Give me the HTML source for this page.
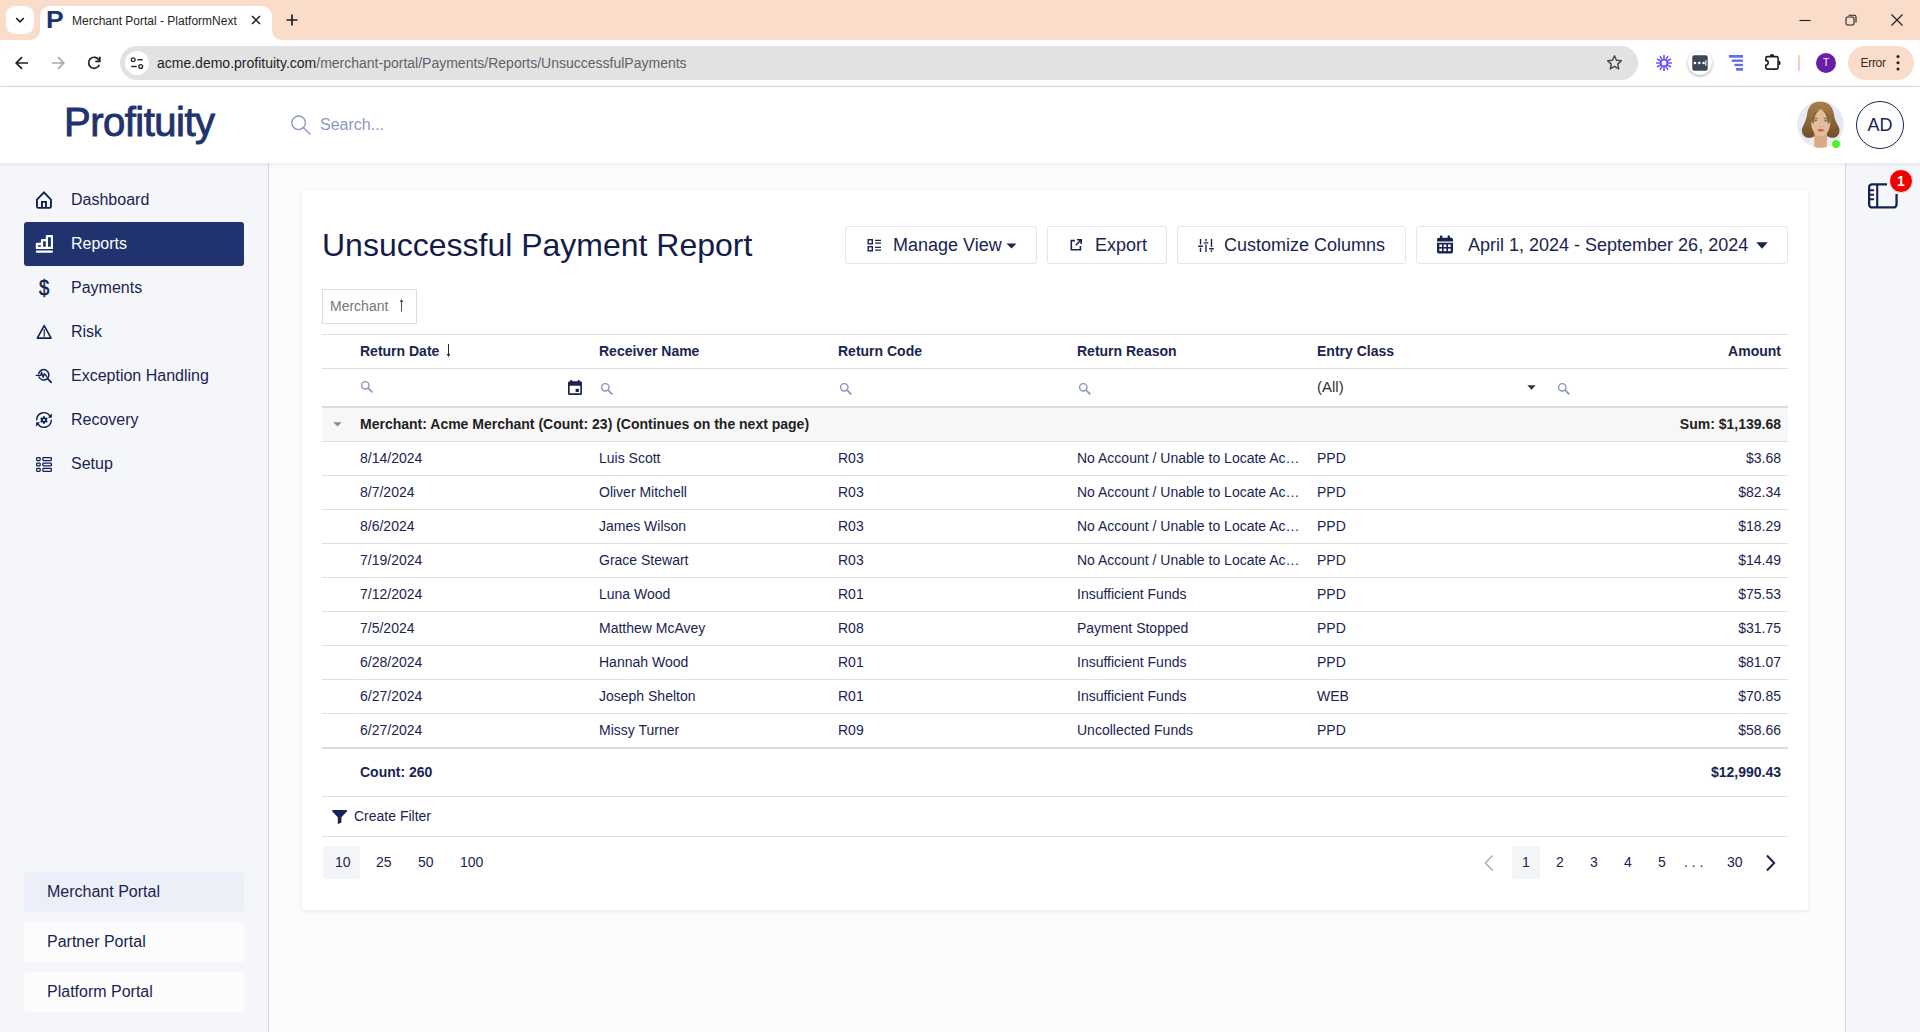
<!DOCTYPE html>
<html lang="en">
<head>
<meta charset="utf-8">
<title>Merchant Portal - PlatformNext</title>
<style>
*{box-sizing:border-box;margin:0;padding:0}
html,body{width:1920px;height:1032px;overflow:hidden;background:#fcfcfc;font-family:"Liberation Sans",Arial,sans-serif;color:#1a2452}
.abs{position:absolute}
svg{display:block}
/* ---------- browser chrome ---------- */
#tabbar{left:0;top:0;width:1920px;height:40px;background:#f9dcc9}
#tabsearch{left:6px;top:6px;width:28px;height:28px;border-radius:9px;background:#fff}
#tab{left:40px;top:6px;width:232px;height:34px;background:#fff;border-radius:10px 10px 0 0}
#tab:before,#tab:after{content:"";position:absolute;bottom:0;width:10px;height:10px}
#tab:before{left:-10px;background:radial-gradient(circle at 0 0,transparent 9.5px,#fff 10.5px)}
#tab:after{right:-10px;background:radial-gradient(circle at 100% 0,transparent 9.5px,#fff 10.5px)}
#tabtitle{left:72px;top:13px;font-size:12px;line-height:16px;color:#1f1f1f;white-space:nowrap;font-family:"Liberation Sans",sans-serif}
#toolbar{left:0;top:40px;width:1920px;height:46px;background:#fff;border-radius:10px 10px 0 0}
#tbline{left:0;top:86px;width:1920px;height:1px;background:#d9d9d9}
#omni{left:120px;top:46px;width:1518px;height:34px;border-radius:17px;background:#e2e2e2}
#omni .chip{left:5px;top:5px;width:24px;height:24px;border-radius:12px;background:#fff}
#url{left:157px;top:54px;font-size:14px;line-height:18px;white-space:nowrap;color:#1f1f1f}
#url span{color:#5f6368}
#errchip{left:1848px;top:46px;width:66px;height:34px;border-radius:17px;background:#f9dcc9}
#errchip span{position:absolute;left:12.500px;top:9px;letter-spacing:-.3px;font-size:12px;line-height:16px;color:#3a2a22}
#prof{left:1816px;top:53px;font-weight:400;width:20px;height:20px;border-radius:10px;background:#6a1ea8;color:#fff;font-size:10px;line-height:20px;text-align:center}
/* ---------- app ---------- */
#apphead{left:0;top:87px;width:1920px;height:76px;background:#fff;box-shadow:0 1px 5px rgba(0,0,0,.09)}
#logo{left:64px;top:96px;font-size:40px;line-height:52px;font-weight:400;letter-spacing:-.5px;color:#22326e;-webkit-text-stroke:.9px #22326e;white-space:nowrap}
#search{left:320px;top:115px;font-size:16px;line-height:20px;color:#8d9ac4}
#ad{left:1856px;top:101px;width:48px;height:48px;border-radius:24px;border:1px solid #1a2452;font-size:18px;line-height:46px;text-align:center;color:#1a2452;background:#fff}
#side{left:0;top:163px;width:269px;height:869px;background:#f5f6fa;border-right:1px solid #d5d8ea}
#rpanel{left:1845px;top:163px;width:75px;height:869px;background:#f5f6fa;border-left:1px solid #d5d8ea}
.nav{left:24px;width:220px;height:44px;border-radius:3px;font-size:16px;line-height:44px;color:#1a2452;padding-left:47px;white-space:nowrap}
.nav.on{background:#21336f;color:#fff}
.portal{left:24px;width:220px;height:40px;border-radius:3px;background:#fcfcfc;font-size:16px;line-height:40px;padding-left:23px;color:#1a2452}
.portal.on{background:#eceef8}
#card{left:302px;top:190px;width:1506px;height:720px;background:#fff;box-shadow:0 1px 4px rgba(40,50,90,.10)}
h1{position:absolute;left:322px;top:223px;font-size:32px;line-height:44px;font-weight:400;color:#141c4a;white-space:nowrap}
.btn{top:226px;height:38px;border:1px solid #e4e5ee;border-radius:3px;background:#fff;font-size:18px;line-height:37px;color:#1a2452;white-space:nowrap}
.btn span{position:absolute;top:0}

.ln{left:322px;width:1466px;height:1px;background:#e0e0e0}
.ln2{left:322px;width:1466px;height:2px;background:#dcdcdc}
.grp{left:322px;top:408px;width:1466px;height:33px;background:#f7f7f7}
.th{top:334px;font-size:14px;line-height:34px;font-weight:700;color:#1a2452;white-space:nowrap}
.gt{top:407px;font-size:14px;line-height:34px;font-weight:700;color:#222;white-space:nowrap}
.td{font-size:14px;line-height:34px;color:#1a2452;white-space:nowrap}
.ft{top:755px;font-size:14px;line-height:34px;font-weight:700;color:#1a2452;white-space:nowrap}
.cf{left:354px;top:799px;font-size:14px;line-height:34px;color:#1a2452;white-space:nowrap}
.pg{top:845px;font-size:14px;line-height:34px;color:#1a2452;white-space:nowrap}
.pgsel{top:846px;height:33px;border-radius:3px;background:#f4f5f9}

#gchip{left:322px;top:289px;width:95px;height:35px;border:1px solid #ddd;background:#fff}
#gchip span{position:absolute;left:7px;top:0;font-size:14px;line-height:33px;color:#777}

#fav{left:46px;top:7px;width:20px;font-size:23px;line-height:27px;font-weight:700;color:#22326e;transform:scaleX(1.15);transform-origin:0 50%}

#badge{left:1889px;top:168.500px;width:24px;height:24px;border-radius:12px;background:#f20000;border:1px solid #fbeaea;color:#fff;font-size:14px;font-weight:700;line-height:22px;text-align:center}
</style>
</head>
<body>
<!-- browser chrome -->
<div id="tabbar" class="abs"></div>
<div id="tabsearch" class="abs"></div>
<div id="tab" class="abs"></div>
<div id="tabtitle" class="abs">Merchant Portal - PlatformNext</div>
<div id="toolbar" class="abs"></div>
<div id="tbline" class="abs"></div>
<div id="omni" class="abs"><div class="chip abs"></div></div>
<div id="url" class="abs">acme.demo.profituity.com<span>/merchant-portal/Payments/Reports/UnsuccessfulPayments</span></div>
<div id="prof" class="abs">T</div>
<div id="errchip" class="abs"><span>Error</span></div>

<!--CHROME-->
<svg class="abs" style="left:14px;top:14px" width="12" height="12" viewBox="0 0 12 12"><path d="M2.200 4 6 7.800 9.800 4" fill="none" stroke="#1f1f1f" stroke-width="1.700"/></svg>
<div class="abs" id="fav">P</div>
<svg class="abs" style="left:250px;top:14px" width="12" height="12" viewBox="0 0 12 12"><path d="M2 2 10 10M10 2 2 10" stroke="#1f1f1f" stroke-width="1.500"/></svg>
<svg class="abs" style="left:285px;top:13px" width="14" height="14" viewBox="0 0 14 14"><path d="M7 1.500V12.500M1.500 7H12.500" stroke="#1f1f1f" stroke-width="1.700"/></svg>
<svg class="abs" style="left:1798px;top:13px" width="14" height="14" viewBox="0 0 14 14"><path d="M1.500 7.500H12.500" stroke="#1f1f1f" stroke-width="1.100"/></svg>
<svg class="abs" style="left:1844px;top:13px" width="14" height="14" viewBox="0 0 14 14"><rect x="2" y="4" width="8" height="8" rx="1.500" fill="none" stroke="#1f1f1f" stroke-width="1.100"/><path d="M4.500 2.200H10.300A1.700 1.700 0 0 1 12 3.900V9.500" fill="none" stroke="#1f1f1f" stroke-width="1.100"/></svg>
<svg class="abs" style="left:1890px;top:13px" width="14" height="14" viewBox="0 0 14 14"><path d="M1.500 1.500 12.500 12.500M12.500 1.500 1.500 12.500" stroke="#1f1f1f" stroke-width="1.200"/></svg>
<svg class="abs" style="left:14px;top:55px" width="16" height="16" viewBox="0 0 16 16"><path d="M14 8H2.800M8 2.200 2.200 8 8 13.800" fill="none" stroke="#1f1f1f" stroke-width="1.700"/></svg>
<svg class="abs" style="left:50px;top:55px" width="16" height="16" viewBox="0 0 16 16"><path d="M2 8H13.200M8 2.200 13.800 8 8 13.800" fill="none" stroke="#a9a9a9" stroke-width="1.700"/></svg>
<svg class="abs" style="left:86px;top:55px" width="16" height="16" viewBox="0 0 16 16"><path d="M13 5.200A5.500 5.500 0 1 0 13.300 9.700" fill="none" stroke="#1f1f1f" stroke-width="1.700"/><path d="M13.800 1.800V6.300H9.300" fill="none" stroke="#1f1f1f" stroke-width="1.700"/></svg>
<svg class="abs" style="left:129px;top:55px" width="16" height="16" viewBox="0 0 16 16"><circle cx="4.200" cy="4.750" r="1.900" fill="none" stroke="#1f1f1f" stroke-width="1.300"/><path d="M8.500 4.750H13.700" stroke="#1f1f1f" stroke-width="1.400"/><circle cx="11.700" cy="11.500" r="1.900" fill="none" stroke="#1f1f1f" stroke-width="1.300"/><path d="M2.200 11.500H7.700" stroke="#1f1f1f" stroke-width="1.400"/></svg>
<svg class="abs" style="left:1605.500px;top:54px" width="17" height="17" viewBox="0 0 18 18"><path d="M9 1.900 11.100 6.700 16.300 7.200 12.400 10.700 13.500 15.800 9 13.100 4.500 15.800 5.600 10.700 1.700 7.200 6.900 6.700Z" fill="none" stroke="#474747" stroke-width="1.500" stroke-linejoin="round"/></svg>
<svg class="abs" style="left:1655px;top:54px" width="18" height="18" viewBox="0 0 18 18"><path d="M12.00 9.00L17.00 9.00M11.60 10.50L15.93 13.00M10.50 11.60L13.00 15.93M9.00 12.00L9.00 17.00M7.50 11.60L5.00 15.93M6.40 10.50L2.07 13.00M6.00 9.00L1.00 9.00M6.40 7.50L2.07 5.00M7.50 6.40L5.00 2.07M9.00 6.00L9.00 1.00M10.50 6.40L13.00 2.07M11.60 7.50L15.93 5.00" stroke="#6157ff" stroke-width="1.600"/><circle cx="9" cy="9" r="3.200" fill="none" stroke="#6157ff" stroke-width="1.600"/></svg>
<div class="abs" style="left:1688px;top:51px;width:24px;height:24px;border-radius:12px;background:#fff;box-shadow:0 1px 3px rgba(0,0,0,.35)"></div>
<svg class="abs" style="left:1692px;top:55px" width="16" height="16" viewBox="0 0 16 16"><rect x=".3" y=".3" width="15.400" height="15.400" rx="2" fill="#3a4757"/><circle cx="3" cy="8" r="1.300" fill="#fff"/><circle cx="7.300" cy="8" r="1.300" fill="#fff"/><circle cx="11.600" cy="8" r="1.300" fill="#fff"/><rect x="13.100" y="5.300" width="1.400" height="5.500" fill="#d5d9de"/></svg>
<svg class="abs" style="left:1728px;top:54px" width="16" height="18" viewBox="0 0 16 18"><g fill="#5b6ff0"><rect x=".9" y="1" width="14.100" height="2.700"/><rect x="3.800" y="5.500" width="11.200" height="2.400"/><rect x="6.400" y="9.800" width="8.600" height="2.300"/><rect x="8.100" y="14" width="6.900" height="2.700"/></g></svg>
<svg class="abs" style="left:1762px;top:52px" width="20" height="20" viewBox="0 0 20 20"><path d="M5.400 4.650H14.500a1.600 1.600 0 0 1 1.600 1.600V15.550a1.600 1.600 0 0 1-1.600 1.600H5.400a1.600 1.600 0 0 1-1.600-1.600V13.200A2.400 2.400 0 0 0 3.800 8.400V6.250a1.600 1.600 0 0 1 1.600-1.600Z" fill="none" stroke="#1f1f1f" stroke-width="1.600"/><path d="M7.750 4.300A2.200 2.200 0 0 1 12.150 4.300ZM16.500 8.800A2.200 2.200 0 0 1 16.500 13.200Z" fill="#1f1f1f"/></svg>
<div class="abs" style="left:1798px;top:55px;width:2px;height:16px;background:#f6cdb6;border-radius:1px"></div>
<svg class="abs" style="left:1895px;top:53px" width="6" height="20" viewBox="0 0 6 20"><circle cx="3" cy="3.600" r="1.500" fill="#1f1f1f"/><circle cx="3" cy="9.800" r="1.500" fill="#1f1f1f"/><circle cx="3" cy="16" r="1.500" fill="#1f1f1f"/></svg>
<!--/CHROME-->
<!-- app header -->
<div id="side" class="abs"></div>
<div id="rpanel" class="abs"></div>
<div id="apphead" class="abs"></div>
<div id="logo" class="abs">Profituity</div>
<div id="search" class="abs">Search...</div>
<div id="ad" class="abs">AD</div>
<!-- sidebar -->
<div class="nav abs" style="top:178px"><svg class="abs" width="18" height="20" viewBox="0 0 18 20" style="left:11px;top:12px"><path d="M1.950 9.700 8.950 2.300 15.950 9.700V16.400a1.500 1.500 0 0 1-1.500 1.500H3.450a1.500 1.500 0 0 1-1.500-1.500Z" fill="none" stroke="#12204f" stroke-width="1.900" stroke-linejoin="round"/><path d="M6.950 17.900V11.850h4V17.900" fill="none" stroke="#12204f" stroke-width="1.900"/></svg>Dashboard</div>
<div class="nav on abs" style="top:222px"><svg class="abs" width="19" height="20" viewBox="0 0 19 20" style="left:11px;top:12px"><path fill-rule="evenodd" fill="#fff" d="M.8 14.900V10a1.200 1.200 0 0 1 1.200-1.200H5.900V6.200a1.200 1.200 0 0 1 1.200-1.200H10.800V2.200a1.200 1.200 0 0 1 1.200-1.200H16.800a1.200 1.200 0 0 1 1.200 1.200V14.900ZM3 11.200H5.900V12.750H3ZM8.100 7.200H10.800V12.750H8.100ZM13 3.200H15.900V12.750H13Z"/><rect x=".8" y="16.500" width="17.200" height="2.300" rx="1.150" fill="#fff"/></svg>Reports</div>
<div class="nav abs" style="top:266px"><span class="abs" style="left:14px;top:0;font-size:22px;line-height:44px;-webkit-text-stroke:.5px #12204f;color:#12204f;transform:scaleX(.84);transform-origin:6px 50%">$</span>Payments</div>
<div class="nav abs" style="top:310px"><svg class="abs" width="19" height="18" viewBox="0 0 19 18" style="left:11px;top:13px"><path d="M9.200 2.700 16.100 15.100H2.300Z" fill="none" stroke="#12204f" stroke-width="1.600" stroke-linejoin="round"/><path d="M9.250 6.300v7.500" stroke="#12204f" stroke-width="1.200"/></svg>Risk</div>
<div class="nav abs" style="top:354px"><svg class="abs" width="18" height="18" viewBox="0 0 18 18" style="left:11px;top:13px"><path d="M3.630 6.630A5.200 5.200 0 1 1 3.990 10" fill="none" stroke="#12204f" stroke-width="1.500" stroke-linecap="round"/><path d="M12.600 11.700 16.200 15.400" stroke="#12204f" stroke-width="1.700" stroke-linecap="round"/><path d="M1.200 8.400H5.750L6.500 5.200 8.100 10.400 9.200 6.700 11.600 9.300" fill="none" stroke="#12204f" stroke-width="1.300" stroke-linejoin="round" stroke-linecap="round"/></svg>Exception Handling</div>
<div class="nav abs" style="top:398px"><svg class="abs" width="18" height="18" viewBox="0 0 18 18" style="left:11px;top:13px"><path d="M1.650 8.700A7.300 7.300 0 0 1 14.930 4.810" fill="none" stroke="#12204f" stroke-width="1.400" stroke-linecap="round"/><path d="M16.250 9.300A7.300 7.300 0 0 1 2.970 13.190" fill="none" stroke="#12204f" stroke-width="1.400" stroke-linecap="round"/><path d="M16.800 2.300V6.660H12.880ZM1.100 15.670V11.300H5.030Z" fill="#12204f"/><circle cx="8.950" cy="9" r="2.600" fill="#12204f"/><path d="M8.950 5.200v7.600M5.660 7.100l6.580 3.800M5.660 10.900l6.580-3.800" stroke="#12204f" stroke-width="2"/><circle cx="8.950" cy="9" r="1.050" fill="#f5f6fa"/></svg>Recovery</div>
<div class="nav abs" style="top:442px"><svg class="abs" width="18" height="17" viewBox="0 0 18 17" style="left:11px;top:14px"><g fill="none" stroke="#12204f" stroke-width="1.300"><rect x="1.650" y="1.650" width="3.500" height="2.900" rx=".8"/><rect x="1.650" y="7.050" width="3.500" height="2.900" rx=".8"/><rect x="1.650" y="12.450" width="3.500" height="2.900" rx=".8"/><rect x="7.850" y="1.650" width="8.500" height="2.900" rx=".8"/><rect x="7.850" y="7.050" width="8.500" height="2.900" rx=".8"/><rect x="7.850" y="12.450" width="8.500" height="2.900" rx=".8"/></g></svg>Setup</div>
<div class="portal on abs" style="top:872px">Merchant Portal</div>
<div class="portal abs" style="top:922px">Partner Portal</div>
<div class="portal abs" style="top:972px">Platform Portal</div>

<!--HDR-->
<svg class="abs" style="left:289px;top:113px" width="24" height="24" viewBox="0 0 24 24"><circle cx="9.600" cy="9.800" r="6.800" fill="none" stroke="#8d9ac4" stroke-width="1.400"/><path d="M14.400 14.800 21 21" stroke="#8d9ac4" stroke-width="1.500" stroke-linecap="round"/></svg>
<svg class="abs" style="left:1796.500px;top:101px" width="47" height="47" viewBox="0 0 47 47"><defs><clipPath id="avc"><circle cx="23.500" cy="23.500" r="23.300"/></clipPath><linearGradient id="hg" x1="0" y1="0" x2="0" y2="1"><stop offset="0" stop-color="#a8824c"/><stop offset=".45" stop-color="#8e6a3a"/><stop offset="1" stop-color="#6e4f28"/></linearGradient></defs><g clip-path="url(#avc)"><rect width="47" height="47" fill="#e6e9f5"/><path d="M7 47 12 41 19 37H29L35 40.500 40 47Z" fill="#eeeef1"/><path d="M23 .6C14.500 .6 11 6.500 10 13.500 9.300 19 7.500 22 5.800 25.500 3.800 29.500 5 34.500 9 36.200 12 37.400 15 36.800 17 35.500L31 35.500C33 36.800 36 37.400 38.500 36.200 42.500 34.500 43.500 29.500 41.500 25.500 39.800 22 37.700 19 37 13.500 36 6.500 32 .6 23 .6Z" fill="url(#hg)"/><path d="M17.300 32H30V47H17.300Z" fill="#d9aa86"/><path d="M19 40 23.700 47 28.500 40 30 38V47H17.300V38Z" fill="#dcae8b"/><path d="M23.700 8.300C18 8.300 14.300 13 14.100 20 13.900 27 17 35.600 23.700 35.600 30.400 35.600 33.500 27 33.300 20 33.100 13 29.400 8.300 23.700 8.300Z" fill="#e5bc9b"/><path d="M14.100 21C13.600 14 17 8.800 23.300 8.300 20 11 17.200 14.500 16.600 23ZM33.300 21C33.800 14 30.500 8.800 24.100 8.300 27.400 11 30.200 14.500 30.800 23Z" fill="#8e6a3a"/><ellipse cx="18.200" cy="19.600" rx="2.200" ry="1" fill="#6f8172"/><ellipse cx="29.200" cy="19.600" rx="2.200" ry="1" fill="#6f8172"/><path d="M15.500 17.900Q18.200 16.400 20.800 17.700M26.600 17.700Q29.200 16.400 31.900 17.900" stroke="#7a5a3a" stroke-width=".8" fill="none"/><path d="M22.400 25.400Q23.700 26.300 25 25.400" stroke="#c6977a" stroke-width=".8" fill="none"/><ellipse cx="23.700" cy="29.300" rx="3.200" ry="1.300" fill="#d2605b"/></g></svg>
<div class="abs" style="left:1830.900px;top:138.900px;width:10.200px;height:10.200px;border-radius:6px;background:#4ff02f;border:1px solid #fff"></div>
<svg class="abs" style="left:1866px;top:180px" width="34" height="30" viewBox="0 0 34 30"><path d="M3.150 7.200A3 3 0 0 1 6.150 4.200H11.200V27.350H6.150A3 3 0 0 1 3.150 24.350Z" fill="#fff"/><path d="M21 4.300H6.150A3 3 0 0 0 3.150 7.300V24.450A3 3 0 0 0 6.150 27.450H27.550A3 3 0 0 0 30.550 24.450V14" fill="none" stroke="#132251" stroke-width="2.300"/><path d="M11.200 4.300V27.450" stroke="#132251" stroke-width="2.100"/><path d="M3.800 10.200H7.300M3.800 14.700H7.300M3.800 19.300H7.300" stroke="#132251" stroke-width="2" stroke-linecap="round"/></svg>
<div class="abs" id="badge">1</div>
<!--/HDR-->
<!-- card -->
<div id="card" class="abs"></div>
<h1>Unsuccessful Payment Report</h1>

<!--BTNS-->
<div class="btn abs" style="left:845px;width:192px"><svg class="abs" style="left:21px;top:11px" width="15" height="15" viewBox="0 0 15 15"><g fill="none" stroke="#1a2452" stroke-width="1.400"><rect x="1.200" y="1.700" width="4.100" height="4.100"/><rect x="1.200" y="8.700" width="4.100" height="4.100"/></g><path d="M8 2.300h6M8 5.200h6M8 9.300h6M8 12.200h6" stroke="#1a2452" stroke-width="1.300"/></svg><span style="left:47px">Manage View</span><svg class="abs" style="left:160px;top:16px" width="11" height="6" viewBox="0 0 11 6"><path d="M.5.500h10L5.500 5.500Z" fill="#1a2452"/></svg></div>
<div class="btn abs" style="left:1047px;width:120px"><svg class="abs" style="left:21px;top:11px" width="14" height="14" viewBox="0 0 14 14"><path d="M6 2.600H2.300v9.100h9.100V8" fill="none" stroke="#1a2452" stroke-width="1.600"/><path d="M8 1.800h4.200V6M12 2 6.800 7.200" fill="none" stroke="#1a2452" stroke-width="1.600"/></svg><span style="left:47px">Export</span></div>
<div class="btn abs" style="left:1177px;width:229px"><svg class="abs" style="left:20px;top:11px" width="16" height="15" viewBox="0 0 16 15"><path d="M2.500 1v5.500M2.500 9.700V14M8 1v2.300M8 6.500V14M13.500 1v8M13.500 12.300V14" stroke="#1a2452" stroke-width="1.400"/><path d="M.2 8.300h4.600M5.700 4.900h4.600M11.200 10.700h4.600" stroke="#1a2452" stroke-width="1.400"/></svg><span style="left:46px">Customize Columns</span></div>
<div class="btn abs" style="left:1416px;width:372px"><svg class="abs" style="left:20px;top:8px" width="16" height="19" viewBox="0 0 16 19"><path d="M0 4.500A1.700 1.700 0 0 1 1.700 2.800H14.300A1.700 1.700 0 0 1 16 4.500V6.500H0Z" fill="#1a2452"/><rect x="3" y=".5" width="2.400" height="4" rx=".6" fill="#1a2452"/><rect x="10.600" y=".5" width="2.400" height="4" rx=".6" fill="#1a2452"/><path d="M0 7.700H16V16.800A1.700 1.700 0 0 1 14.300 18.500H1.700A1.700 1.700 0 0 1 0 16.800Z" fill="#1a2452"/><g fill="#fff"><rect x="2.300" y="9.500" width="2.700" height="2.500"/><rect x="6.650" y="9.500" width="2.700" height="2.500"/><rect x="11" y="9.500" width="2.700" height="2.500"/><rect x="2.300" y="13.600" width="2.700" height="2.500"/><rect x="6.650" y="13.600" width="2.700" height="2.500"/><rect x="11" y="13.600" width="2.700" height="2.500"/></g></svg><span style="left:51px">April 1, 2024 - September 26, 2024</span><svg class="abs" style="left:339px;top:15px" width="12" height="7" viewBox="0 0 12 7"><path d="M.3.300h11.400L6 6.700Z" fill="#1a2452"/></svg></div>
<div class="abs" id="gchip"><span>Merchant</span><svg class="abs" style="left:74px;top:8px" width="9" height="14" viewBox="0 0 9 14"><path d="M4.500 2V13.500" fill="none" stroke="#4a5070" stroke-width="1"/><path d="M2.600 4 4.500 1 6.400 4Z" fill="#4a5070"/></svg></div>
<!--/BTNS-->
<!--TABLE-->
<div class="ln abs" style="top:334px"></div>
<div class="ln abs" style="top:368px"></div>
<div class="ln2 abs" style="top:406px"></div>
<div class="grp abs"></div>
<div class="ln abs" style="top:441px"></div>
<div class="th abs" style="left:360px">Return Date</div>
<div class="th abs" style="left:599px">Receiver Name</div>
<div class="th abs" style="left:838px">Return Code</div>
<div class="th abs" style="left:1077px">Return Reason</div>
<div class="th abs" style="left:1317px">Entry Class</div>
<div class="th abs r" style="left:1588px;width:193px;text-align:right">Amount</div>
<div class="gt abs" style="left:360px">Merchant: Acme Merchant (Count: 23) (Continues on the next page)</div>
<div class="gt abs" style="left:1588px;width:193px;text-align:right">Sum: $1,139.68</div>
<div class="td abs" style="left:1317px;top:370px;font-size:15px;line-height:34px;color:#333">(All)</div>
<div class="td abs" style="left:360px;top:441px">8/14/2024</div>
<div class="td abs" style="left:599px;top:441px">Luis Scott</div>
<div class="td abs" style="left:838px;top:441px">R03</div>
<div class="td abs" style="left:1077px;top:441px;width:225px;overflow:hidden;text-overflow:ellipsis">No Account / Unable to Locate Account</div>
<div class="td abs" style="left:1317px;top:441px">PPD</div>
<div class="td abs" style="left:1588px;width:193px;text-align:right;top:441px">$3.68</div>
<div class="ln abs" style="top:475px"></div>
<div class="td abs" style="left:360px;top:475px">8/7/2024</div>
<div class="td abs" style="left:599px;top:475px">Oliver Mitchell</div>
<div class="td abs" style="left:838px;top:475px">R03</div>
<div class="td abs" style="left:1077px;top:475px;width:225px;overflow:hidden;text-overflow:ellipsis">No Account / Unable to Locate Account</div>
<div class="td abs" style="left:1317px;top:475px">PPD</div>
<div class="td abs" style="left:1588px;width:193px;text-align:right;top:475px">$82.34</div>
<div class="ln abs" style="top:509px"></div>
<div class="td abs" style="left:360px;top:509px">8/6/2024</div>
<div class="td abs" style="left:599px;top:509px">James Wilson</div>
<div class="td abs" style="left:838px;top:509px">R03</div>
<div class="td abs" style="left:1077px;top:509px;width:225px;overflow:hidden;text-overflow:ellipsis">No Account / Unable to Locate Account</div>
<div class="td abs" style="left:1317px;top:509px">PPD</div>
<div class="td abs" style="left:1588px;width:193px;text-align:right;top:509px">$18.29</div>
<div class="ln abs" style="top:543px"></div>
<div class="td abs" style="left:360px;top:543px">7/19/2024</div>
<div class="td abs" style="left:599px;top:543px">Grace Stewart</div>
<div class="td abs" style="left:838px;top:543px">R03</div>
<div class="td abs" style="left:1077px;top:543px;width:225px;overflow:hidden;text-overflow:ellipsis">No Account / Unable to Locate Account</div>
<div class="td abs" style="left:1317px;top:543px">PPD</div>
<div class="td abs" style="left:1588px;width:193px;text-align:right;top:543px">$14.49</div>
<div class="ln abs" style="top:577px"></div>
<div class="td abs" style="left:360px;top:577px">7/12/2024</div>
<div class="td abs" style="left:599px;top:577px">Luna Wood</div>
<div class="td abs" style="left:838px;top:577px">R01</div>
<div class="td abs" style="left:1077px;top:577px;width:225px;overflow:hidden;text-overflow:ellipsis">Insufficient Funds</div>
<div class="td abs" style="left:1317px;top:577px">PPD</div>
<div class="td abs" style="left:1588px;width:193px;text-align:right;top:577px">$75.53</div>
<div class="ln abs" style="top:611px"></div>
<div class="td abs" style="left:360px;top:611px">7/5/2024</div>
<div class="td abs" style="left:599px;top:611px">Matthew McAvey</div>
<div class="td abs" style="left:838px;top:611px">R08</div>
<div class="td abs" style="left:1077px;top:611px;width:225px;overflow:hidden;text-overflow:ellipsis">Payment Stopped</div>
<div class="td abs" style="left:1317px;top:611px">PPD</div>
<div class="td abs" style="left:1588px;width:193px;text-align:right;top:611px">$31.75</div>
<div class="ln abs" style="top:645px"></div>
<div class="td abs" style="left:360px;top:645px">6/28/2024</div>
<div class="td abs" style="left:599px;top:645px">Hannah Wood</div>
<div class="td abs" style="left:838px;top:645px">R01</div>
<div class="td abs" style="left:1077px;top:645px;width:225px;overflow:hidden;text-overflow:ellipsis">Insufficient Funds</div>
<div class="td abs" style="left:1317px;top:645px">PPD</div>
<div class="td abs" style="left:1588px;width:193px;text-align:right;top:645px">$81.07</div>
<div class="ln abs" style="top:679px"></div>
<div class="td abs" style="left:360px;top:679px">6/27/2024</div>
<div class="td abs" style="left:599px;top:679px">Joseph Shelton</div>
<div class="td abs" style="left:838px;top:679px">R01</div>
<div class="td abs" style="left:1077px;top:679px;width:225px;overflow:hidden;text-overflow:ellipsis">Insufficient Funds</div>
<div class="td abs" style="left:1317px;top:679px">WEB</div>
<div class="td abs" style="left:1588px;width:193px;text-align:right;top:679px">$70.85</div>
<div class="ln abs" style="top:713px"></div>
<div class="td abs" style="left:360px;top:713px">6/27/2024</div>
<div class="td abs" style="left:599px;top:713px">Missy Turner</div>
<div class="td abs" style="left:838px;top:713px">R09</div>
<div class="td abs" style="left:1077px;top:713px;width:225px;overflow:hidden;text-overflow:ellipsis">Uncollected Funds</div>
<div class="td abs" style="left:1317px;top:713px">PPD</div>
<div class="td abs" style="left:1588px;width:193px;text-align:right;top:713px">$58.66</div>
<div class="ln2 abs" style="top:747px"></div>
<div class="ft abs" style="left:360px">Count: 260</div>
<div class="ft abs" style="left:1588px;width:193px;text-align:right">$12,990.43</div>
<div class="ln abs" style="top:796px"></div>
<div class="cf abs">Create Filter</div>
<div class="ln abs" style="top:836px"></div>
<div class="pgsel abs" style="left:323px;width:37px"></div>
<div class="pg abs" style="left:335px">10</div>
<div class="pg abs" style="left:376px">25</div>
<div class="pg abs" style="left:418px">50</div>
<div class="pg abs" style="left:460px">100</div>
<div class="pgsel abs" style="left:1512px;width:28px"></div>
<div class="pg abs" style="left:1522px">1</div>
<div class="pg abs" style="left:1556px">2</div>
<div class="pg abs" style="left:1590px">3</div>
<div class="pg abs" style="left:1624px">4</div>
<div class="pg abs" style="left:1658px">5</div>
<div class="pg abs" style="left:1684px">. . .</div>
<div class="pg abs" style="left:1727px">30</div>
<svg class="abs" style="left:360px;top:380px" width="14" height="14" viewBox="0 0 14 14"><circle cx="5.300" cy="5.300" r="3.700" fill="none" stroke="#8b96bf" stroke-width="1.400"/><path d="M8.100 8.100 12.300 12.300" stroke="#8b96bf" stroke-width="1.700"/></svg>
<svg class="abs" style="left:600px;top:382px" width="14" height="14" viewBox="0 0 14 14"><circle cx="5.300" cy="5.300" r="3.700" fill="none" stroke="#8b96bf" stroke-width="1.400"/><path d="M8.100 8.100 12.300 12.300" stroke="#8b96bf" stroke-width="1.700"/></svg>
<svg class="abs" style="left:839px;top:382px" width="14" height="14" viewBox="0 0 14 14"><circle cx="5.300" cy="5.300" r="3.700" fill="none" stroke="#8b96bf" stroke-width="1.400"/><path d="M8.100 8.100 12.300 12.300" stroke="#8b96bf" stroke-width="1.700"/></svg>
<svg class="abs" style="left:1078px;top:382px" width="14" height="14" viewBox="0 0 14 14"><circle cx="5.300" cy="5.300" r="3.700" fill="none" stroke="#8b96bf" stroke-width="1.400"/><path d="M8.100 8.100 12.300 12.300" stroke="#8b96bf" stroke-width="1.700"/></svg>
<svg class="abs" style="left:1557px;top:382px" width="14" height="14" viewBox="0 0 14 14"><circle cx="5.300" cy="5.300" r="3.700" fill="none" stroke="#8b96bf" stroke-width="1.400"/><path d="M8.100 8.100 12.300 12.300" stroke="#8b96bf" stroke-width="1.700"/></svg>
<svg class="abs" style="left:444px;top:343px" width="9" height="15" viewBox="0 0 9 15"><path d="M4.500 1V12.500" fill="none" stroke="#1a2452" stroke-width="1"/><path d="M2.600 11 4.500 14 6.400 11Z" fill="#1a2452"/></svg>
<svg class="abs" style="left:567px;top:379px" width="16" height="17" viewBox="0 0 16 17"><path d="M1 3.800A1.500 1.500 0 0 1 2.500 2.300H13.500A1.500 1.500 0 0 1 15 3.800V14.500A1.500 1.500 0 0 1 13.500 16H2.500A1.500 1.500 0 0 1 1 14.500ZM2.700 6.700V14.300H13.300V6.700Z" fill="#1a2452" fill-rule="evenodd"/><rect x="3.400" y="1" width="1.800" height="2.500" fill="#1a2452"/><rect x="10.800" y="1" width="1.800" height="2.500" fill="#1a2452"/><rect x="8.600" y="9.800" width="3.300" height="3.200" fill="#1a2452"/></svg>
<svg class="abs" style="left:1527px;top:385px" width="9" height="5" viewBox="0 0 9 5"><path d="M.3.300h8.400L4.500 4.700Z" fill="#333"/></svg>
<svg class="abs" style="left:333px;top:422px" width="9" height="5" viewBox="0 0 9 5"><path d="M.3.200h8.400L4.500 4.600Z" fill="#8a8a8a"/></svg>
<svg class="abs" style="left:332px;top:809px" width="16" height="16" viewBox="0 0 16 16"><path d="M.3 1H14.900V2.600L9.400 8.200V13.600L5.800 15.200V8.200L.3 2.600Z" fill="#1a2452"/></svg>
<svg class="abs" style="left:1483px;top:854px" width="12" height="18" viewBox="0 0 12 18"><path d="M9.600 1.500 2.400 9l7.200 7.500" fill="none" stroke="#a9adc4" stroke-width="1.500"/></svg>
<svg class="abs" style="left:1764px;top:854px" width="13" height="18" viewBox="0 0 13 18"><path d="M3 1.500 10.200 9 3 16.500" fill="none" stroke="#1a2452" stroke-width="2"/></svg>
<!--/TABLE-->
</body>
</html>
